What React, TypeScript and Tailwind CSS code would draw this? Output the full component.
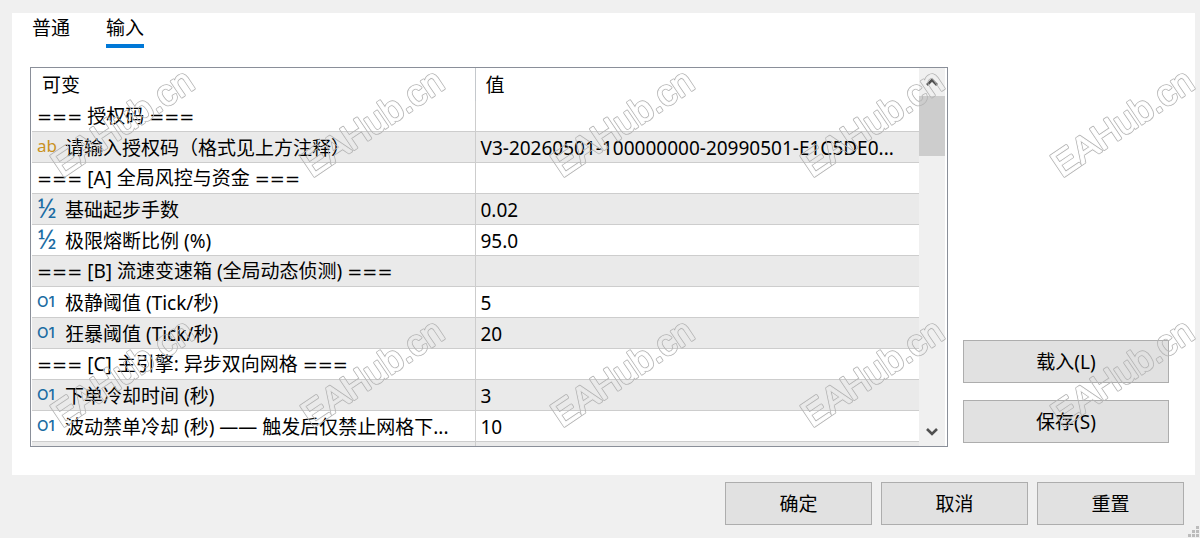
import { useState } from "react";

type ParamKind = "string" | "double" | "int" | "group";

interface Param {
  kind: ParamKind;
  name: string;
  value?: string;
}

const TABS = ["普通", "输入"];

const PARAMS: Param[] = [
  { kind: "group", name: "=== 授权码 ===" },
  {
    kind: "string",
    name: "请输入授权码（格式见上方注释）",
    value: "V3-20260501-100000000-20990501-E1C5DE0...",
  },
  { kind: "group", name: "=== [A] 全局风控与资金 ===" },
  { kind: "double", name: "基础起步手数", value: "0.02" },
  { kind: "double", name: "极限熔断比例 (%)", value: "95.0" },
  { kind: "group", name: "=== [B] 流速变速箱 (全局动态侦测) ===" },
  { kind: "int", name: "极静阈值 (Tick/秒)", value: "5" },
  { kind: "int", name: "狂暴阈值 (Tick/秒)", value: "20" },
  { kind: "group", name: "=== [C] 主引擎: 异步双向网格 ===" },
  { kind: "int", name: "下单冷却时间 (秒)", value: "3" },
  {
    kind: "int",
    name: "波动禁单冷却 (秒) —— 触发后仅禁止网格下...",
    value: "10",
  },
  { kind: "group", name: "" },
];

const WATERMARK_COLUMNS = [62, 312, 562, 812, 1062];
const WATERMARK_ROWS = [178, 428];

function KindIcon({ kind }: { kind: ParamKind }) {
  switch (kind) {
    case "string":
      return (
        <span className="w-7 shrink-0 text-[17px] leading-5 text-[#c9921f]" aria-hidden>
          ab
        </span>
      );
    case "double":
      return (
        <span
          className="w-7 shrink-0 font-['Lato',sans-serif] text-[27px] leading-5 text-[#1b6ca3]"
          aria-hidden
        >
          ½
        </span>
      );
    case "int":
      return (
        <span
          className="w-7 shrink-0 font-['Inter',sans-serif] text-[15px] leading-[22px] font-medium text-[#1b6ca3]"
          aria-hidden
        >
          O1
        </span>
      );
    default:
      return null;
  }
}

// The equals signs of a group title are wider than the rest of the text
function GroupTitle({ text }: { text: string }) {
  return (
    <span className="whitespace-pre">
      {text.split(/(=+)/).map((part, index) =>
        part.startsWith("=") ? (
          <span key={index} className="font-['DejaVu_Sans',sans-serif] text-[18px]">
            {part}
          </span>
        ) : (
          part
        ),
      )}
    </span>
  );
}

function Chevron({ direction }: { direction: "up" | "down" }) {
  return (
    <svg
      width="14"
      height="10"
      viewBox="0 0 14 10"
      fill="none"
      stroke="#505050"
      strokeWidth={2.6}
      aria-hidden
    >
      <path d={direction === "up" ? "M2 8l5-5 5 5" : "M2 2l5 5 5-5"} />
    </svg>
  );
}

function DialogButton({ label, className }: { label: string; className: string }) {
  return (
    <button
      type="button"
      className={`h-[43px] border border-[#adadad] bg-[#e1e1e1] leading-6 hover:border-[#0078d7] hover:bg-[#e5f1fb] ${className}`}
    >
      {label}
    </button>
  );
}

function Watermark() {
  return (
    <svg
      className="pointer-events-none absolute inset-0 h-full w-full overflow-hidden font-['Liberation_Sans',sans-serif] text-[36px]"
      aria-hidden
    >
      <defs>
        {/* Hides the inside of the letters, so that only a rounded rim is left */}
        <mask
          id="watermark-rim"
          maskUnits="userSpaceOnUse"
          x="-10"
          y="-50"
          width="220"
          height="80"
        >
          <rect x="-10" y="-50" width="220" height="80" fill="white" />
          <text fill="black" stroke="black" strokeWidth={1} strokeLinejoin="round">
            EAHub.cn
          </text>
        </mask>
      </defs>
      {WATERMARK_ROWS.map((y) =>
        WATERMARK_COLUMNS.map((x) => (
          <g key={`${x}-${y}`} transform={`translate(${x} ${y}) rotate(-34)`}>
            <text
              mask="url(#watermark-rim)"
              fill="none"
              stroke="#b4b4b4"
              strokeWidth={2.6}
              strokeLinejoin="round"
            >
              EAHub.cn
            </text>
          </g>
        )),
      )}
    </svg>
  );
}

function ParamTable() {
  return (
    <div className="flex h-[380px] min-w-0 flex-1 border border-[#8a8f99] bg-white pr-0.5">
      <div className="min-w-0 flex-1 overflow-hidden pl-px">
        <table className="w-full table-fixed border-separate border-spacing-0 text-left">
          <thead>
            <tr>
              <th className="h-[33px] w-1/2 border-r border-[#c4c8cc] pl-[10px] align-middle font-normal">
                可变
              </th>
              <th className="h-[33px] pl-[10px] align-middle font-normal">值</th>
            </tr>
          </thead>
          <tbody>
            {PARAMS.map((param, index) => (
              <tr key={index} className="odd:bg-white even:bg-[#eaeaea]">
                <td className="h-[31px] border-r border-b border-[#cdcdcd] pt-px pl-[5px] align-middle">
                  {param.kind === "group" ? (
                    <GroupTitle text={param.name} />
                  ) : (
                    <div className="flex items-start whitespace-nowrap">
                      <KindIcon kind={param.kind} />
                      <span>{param.name}</span>
                    </div>
                  )}
                </td>
                <td className="h-[31px] truncate border-b border-[#cdcdcd] pt-px pl-[5px] align-middle">
                  {param.value}
                </td>
              </tr>
            ))}
          </tbody>
        </table>
      </div>
      <div className="flex w-[26px] shrink-0 flex-col bg-[#f0f0f0]">
        <button
          type="button"
          aria-label="向上滚动"
          className="flex h-7 items-center justify-center"
        >
          <Chevron direction="up" />
        </button>
        <div className="h-[60px] bg-[#cdcdcd]" />
        <div className="flex-1" />
        <button
          type="button"
          aria-label="向下滚动"
          className="flex h-7 items-center justify-center"
        >
          <Chevron direction="down" />
        </button>
      </div>
    </div>
  );
}

function ResizeGrip() {
  return (
    <svg
      className="absolute right-0 bottom-0"
      width="12"
      height="12"
      fill="#bcbcbc"
      aria-hidden
    >
      <path d="M8 0h3v3h-3zM4 4h3v3h-3zM8 4h3v3h-3zM0 8h3v3h-3zM4 8h3v3h-3zM8 8h3v3h-3z" />
    </svg>
  );
}

export default function App() {
  const [activeTab, setActiveTab] = useState("输入");

  return (
    <div
      lang="zh-CN"
      className="relative min-h-screen bg-[#f0f0f0] pt-[13px] font-['Noto_Sans','Noto_Sans_CJK_SC',sans-serif] text-[19px] leading-6 text-black"
    >
      <main className="mr-[5px] ml-3 bg-white pt-[3px] pr-[26px] pb-7 pl-[18px]">
        <div role="tablist" className="flex gap-9 pl-0.5">
          {TABS.map((tab) => (
            <button
              key={tab}
              type="button"
              role="tab"
              aria-selected={tab === activeTab}
              onClick={() => setActiveTab(tab)}
              className={`border-b-4 pb-1 ${
                tab === activeTab ? "border-[#0078d7]" : "border-transparent"
              }`}
            >
              {tab}
            </button>
          ))}
        </div>

        <div className="mt-[19px] flex gap-[15px]">
          <ParamTable />
          <div className="flex w-[206px] shrink-0 flex-col justify-end gap-[17px] pb-1">
            <DialogButton label="载入(L)" className="w-full" />
            <DialogButton label="保存(S)" className="w-full" />
          </div>
        </div>
      </main>

      <footer className="flex justify-end gap-[9px] pt-[7px] pr-4 pb-3">
        <DialogButton label="确定" className="w-[147px]" />
        <DialogButton label="取消" className="w-[147px]" />
        <DialogButton label="重置" className="w-[147px]" />
      </footer>

      <ResizeGrip />
      <Watermark />
    </div>
  );
}
